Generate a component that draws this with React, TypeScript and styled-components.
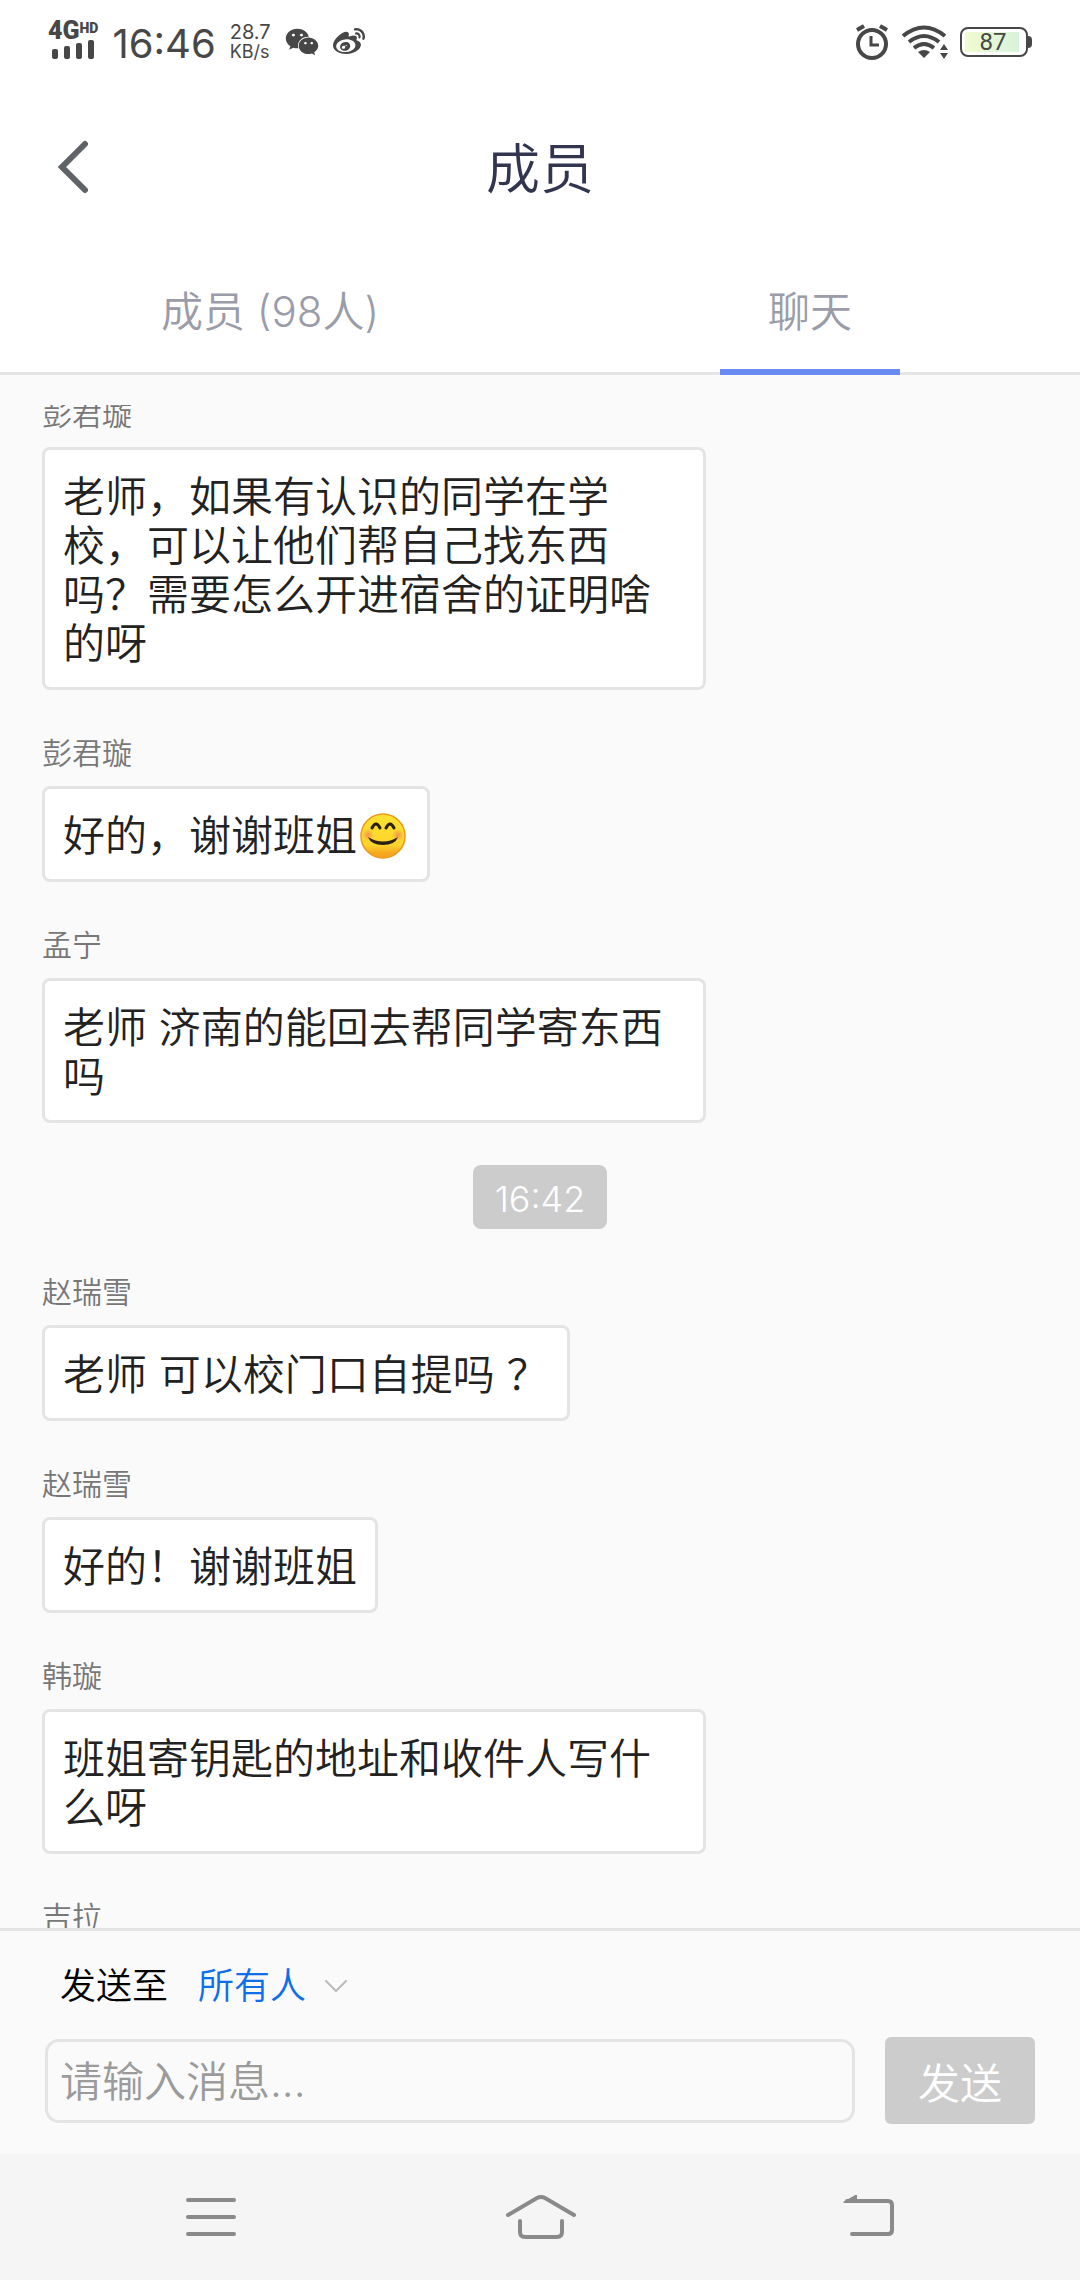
import React, { useLayoutEffect, useRef, useState } from "react";
import styled, { createGlobalStyle } from "styled-components";
import { FaWeibo, FaWeixin } from "react-icons/fa";

const GlobalStyle = createGlobalStyle`
  *, *::before, *::after { box-sizing: border-box; }
  body {
    margin: 0;
    background: #fafafa;
    font-family: Inter, "Noto Sans CJK SC", sans-serif;
    font-weight: 350;
  }
  button, input, select { font-family: inherit; font-weight: inherit; }
`;

const Screen = styled.div`
  display: flex;
  flex-direction: column;
  height: 100vh;
  background: #fafafa;
`;

/* ---------- status bar ---------- */

const StatusBar = styled.div`
  display: flex;
  flex: none;
  align-items: center;
  justify-content: space-between;
  height: 84px;
  padding: 0 48px;
  background: #fff;
  color: #474747;
  font-weight: 400;
`;

const StatusGroup = styled.div<{ $gap: number }>`
  display: flex;
  align-items: center;
  gap: ${(p) => p.$gap}px;
`;

const Signal = styled.div`
  display: flex;
  flex-direction: column;
  padding-bottom: 2px;
`;

const Network = styled.div`
  display: flex;
  align-items: flex-start;
  font-family: Roboto, sans-serif;
  font-size: 25px;
  font-weight: 900;
  line-height: 18px;
`;

const NetworkMark = styled.span`
  font-size: 14px;
  line-height: 12px;
`;

const Clock = styled.span`
  padding-top: 4px;
  font-size: 40px;
  line-height: 48px;
`;

const Speed = styled.span`
  display: flex;
  flex-direction: column;
  font-size: 20px;
  line-height: 19px;
`;

const SpeedUnit = styled.span`
  font-size: 18px;
`;

const Battery = styled.div`
  display: flex;
  align-items: center;
`;

const BatteryCase = styled.div`
  width: 68px;
  height: 30px;
  padding: 3px;
  border: 2px solid #474747;
  border-radius: 8px;
`;

const BatteryLevel = styled.div`
  width: 54px;
  height: 20px;
  padding-left: 2px;
  background: linear-gradient(90deg, #f0fbd0, #d8f3dc);
  font-family: Roboto, sans-serif;
  font-size: 24px;
  line-height: 21px;
  text-align: center;
`;

const BatteryTip = styled.div`
  width: 4px;
  height: 12px;
  border-radius: 0 4px 4px 0;
  background: #474747;
`;

/* ---------- header and tabs ---------- */

const Header = styled.header`
  display: grid;
  flex: none;
  grid-template-columns: 96px 1fr 96px;
  align-items: center;
  height: 168px;
  background: #fff;
`;

const IconButton = styled.button`
  display: flex;
  align-items: center;
  justify-content: center;
  padding: 0;
  border: 0;
  background: none;
  color: ${(p) => p.color};
`;

const BackButton = styled(IconButton)`
  justify-content: flex-end;
  width: 96px;
  height: 96px;
  padding: 0 7px 2px 0;
`;

const Title = styled.h1`
  margin: 0;
  padding-top: 4px;
  color: #32354f;
  font-size: 54px;
  font-weight: 350;
  line-height: 72px;
  text-align: center;
`;

const Tabs = styled.div`
  display: flex;
  flex: none;
  height: 123px;
  border-bottom: 3px solid #e5e5e5;
  background: #fff;
`;

const Tab = styled.button<{ $active: boolean }>`
  position: relative;
  flex: 1;
  padding: 0;
  border: 0;
  background: none;
  color: #9b9ca9;
  font-size: 42px;
  line-height: 60px;

  &::after {
    content: "";
    position: absolute;
    bottom: -3px;
    left: 50%;
    width: 180px;
    height: 6px;
    margin-left: -90px;
    background: ${(p) => (p.$active ? "#678bf0" : "transparent")};
  }
`;

/* ---------- conversation ---------- */

const Conversation = styled.main`
  flex: 1;
  min-height: 0;
  margin-top: 30px;
  padding: 0 42px;
  overflow-y: auto;
  scrollbar-width: none;
`;

const MessageList = styled.ol`
  display: flex;
  flex-direction: column;
  gap: 42px;
  margin: 0;
  padding: 0;
  list-style: none;
`;

const Message = styled.li`
  display: flex;
  flex-direction: column;
  align-items: flex-start;
  gap: 12px;
`;

const Sender = styled.span`
  color: #777;
  font-size: 30px;
  line-height: 42px;
`;

const Bubble = styled.p`
  max-width: calc(100% * 2 / 3);
  margin: 0;
  padding: 22px 18px 19px;
  border: 3px solid #e4e4e4;
  border-radius: 8px;
  background: #fff;
  color: #222;
  font-size: 42px;
  line-height: 49px;
`;

const EmojiSvg = styled.svg`
  display: inline-block;
  width: 46px;
  height: 46px;
  margin: 0 3px;
  vertical-align: -8px;
`;

const TimeMark = styled.li`
  align-self: center;
  padding: 8px 22px 4px;
  border-radius: 8px;
  background: #ccc;
  color: #fff;
  font-size: 36px;
  font-weight: 300;
  line-height: 52px;
`;

/* ---------- composer ---------- */

const Composer = styled.form`
  display: flex;
  flex: none;
  flex-direction: column;
  gap: 27px;
  padding: 31px 45px 30px;
  border-top: 3px solid #e4e4e4;
`;

const Recipient = styled.div`
  display: flex;
  align-items: center;
  gap: 30px;
  padding-left: 15px;
  font-size: 36px;
  line-height: 48px;
`;

const RecipientLabel = styled.label`
  color: #000;
`;

const SelectWrap = styled.div`
  position: relative;
  display: flex;
  align-items: center;
`;

const Select = styled.select`
  height: 48px;
  padding: 0 42px 0 0;
  border: 0;
  appearance: none;
  background: none;
  color: #0f6fe8;
  font-size: 36px;
  line-height: 48px;
`;

const SelectArrow = styled.svg`
  position: absolute;
  right: 1px;
  pointer-events: none;
`;

const Entry = styled.div`
  display: flex;
  align-items: center;
  gap: 30px;
`;

const MessageInput = styled.input`
  flex: 1;
  min-width: 0;
  height: 84px;
  padding: 2px 12px 0;
  border: 3px solid #e4e4e4;
  border-radius: 14px;
  background: none;
  color: #222;
  font-size: 42px;

  &::placeholder {
    color: #9b9b9b;
    opacity: 1;
  }
`;

const SendButton = styled.button`
  width: 150px;
  height: 87px;
  padding: 0;
  border: 0;
  border-radius: 6px;
  background: #ccc;
  color: #fff;
  font-size: 42px;
`;

/* ---------- system navigation ---------- */

const SystemNav = styled.nav`
  display: grid;
  flex: none;
  grid-template-columns: 1fr 1fr 1fr;
  height: 126px;
  padding: 0 45px;
  background: #f5f5f5;
`;

const AlarmIcon = () => (
  <svg width="34" height="36" viewBox="0 0 34 36" fill="none" stroke="currentColor">
    <circle cx="17" cy="20" r="14" strokeWidth="4" />
    <path d="M16 12v9h8" strokeWidth="3" />
    <path d="M2 6l7-4M32 6l-7-4" strokeWidth="4" />
  </svg>
);

const WifiIcon = () => (
  <svg width="47" height="34" viewBox="0 0 47 34" fill="none" stroke="currentColor">
    <path d="M2 11Q23 -6 44 11M8 17Q23 5 38 17M13 23Q23 15 33 23" strokeWidth="4" />
    <path d="M17 27Q23 23 29 27L23 33Z" fill="currentColor" stroke="none" />
    <path d="M39 25l4-6 4 6ZM39 28l4 6 4-6Z" fill="currentColor" stroke="none" />
  </svg>
);

const SignalBars = () => (
  <svg width="50" height="20" viewBox="0 0 50 20" fill="currentColor">
    <rect x="4" y="9" width="6" height="10" rx="2" />
    <rect x="16" y="6" width="6" height="13" rx="2" />
    <rect x="28" y="3" width="6" height="16" rx="2" />
    <rect x="40" y="0" width="6" height="19" rx="2" />
  </svg>
);

const SmileEmoji = () => (
  <EmojiSvg viewBox="0 0 46 46" role="img" aria-label="😊">
    <defs>
      <linearGradient id="face" x1="0" y1="0" x2="0" y2="1">
        <stop offset="0.1" stopColor="#fde030" />
        <stop offset="0.7" stopColor="#fcd52c" />
        <stop offset="0.9" stopColor="#f7a520" />
      </linearGradient>
      <radialGradient id="cheek">
        <stop offset="0" stopColor="#f2835a" stopOpacity="0.8" />
        <stop offset="1" stopColor="#f2835a" stopOpacity="0" />
      </radialGradient>
    </defs>
    <circle cx="23" cy="23" r="22" fill="url(#face)" stroke="#eb9a1c" strokeWidth="1.5" />
    <circle cx="8" cy="22" r="6" fill="url(#cheek)" />
    <circle cx="38" cy="22" r="6" fill="url(#cheek)" />
    <path
      d="M12 15q4 -8 8 0M26 15q4 -8 8 0"
      fill="none"
      stroke="#2b2010"
      strokeWidth="3"
      strokeLinecap="round"
    />
    <path d="M8 24q15 9 30 0q-3 8 -15 8t-15 -8Z" fill="#2b2010" />
  </EmojiSvg>
);

type ChatEntry =
  | { kind: "message"; sender: string; body?: React.ReactNode }
  | { kind: "time"; label: string };

const entries: ChatEntry[] = [
  {
    kind: "message",
    sender: "彭君璇",
    body: "老师，如果有认识的同学在学校，可以让他们帮自己找东西吗？需要怎么开进宿舍的证明啥的呀",
  },
  {
    kind: "message",
    sender: "彭君璇",
    body: (
      <>
        好的，谢谢班姐
        <SmileEmoji />
      </>
    ),
  },
  { kind: "message", sender: "孟宁", body: "老师 济南的能回去帮同学寄东西吗" },
  { kind: "time", label: "16:42" },
  { kind: "message", sender: "赵瑞雪", body: "老师 可以校门口自提吗 ？" },
  { kind: "message", sender: "赵瑞雪", body: "好的！谢谢班姐" },
  { kind: "message", sender: "韩璇", body: "班姐寄钥匙的地址和收件人写什么呀" },
  { kind: "message", sender: "吉拉" },
];

const INITIAL_SCROLL = 12;

export default function App() {
  const [tab, setTab] = useState<"members" | "chat">("chat");
  const [draft, setDraft] = useState("");
  const conversation = useRef<HTMLElement>(null);

  useLayoutEffect(() => {
    if (conversation.current) conversation.current.scrollTop = INITIAL_SCROLL;
  }, []);

  return (
    <Screen>
      <GlobalStyle />
      <StatusBar>
        <StatusGroup $gap={14}>
          <Signal>
            <Network>
              4G<NetworkMark>HD</NetworkMark>
            </Network>
            <SignalBars />
          </Signal>
          <Clock>16:46</Clock>
          <Speed>
            28.7
            <SpeedUnit>KB/s</SpeedUnit>
          </Speed>
          <FaWeixin size={34} />
          <FaWeibo size={32} />
        </StatusGroup>
        <StatusGroup $gap={12}>
          <AlarmIcon />
          <WifiIcon />
          <Battery>
            <BatteryCase>
              <BatteryLevel>87</BatteryLevel>
            </BatteryCase>
            <BatteryTip />
          </Battery>
        </StatusGroup>
      </StatusBar>

      <Header>
        <BackButton type="button" aria-label="返回" color="#5f6368">
          <svg width="32" height="56" viewBox="0 0 32 56" fill="none" stroke="currentColor">
            <path d="M28 5L5 28L28 51" strokeWidth="6" strokeLinecap="round" />
          </svg>
        </BackButton>
        <Title>成员</Title>
      </Header>

      <Tabs role="tablist">
        <Tab
          type="button"
          role="tab"
          aria-selected={tab === "members"}
          $active={tab === "members"}
          onClick={() => setTab("members")}
        >
          成员 (98人)
        </Tab>
        <Tab
          type="button"
          role="tab"
          aria-selected={tab === "chat"}
          $active={tab === "chat"}
          onClick={() => setTab("chat")}
        >
          聊天
        </Tab>
      </Tabs>

      <Conversation ref={conversation}>
        <MessageList>
          {entries.map((entry, i) =>
            entry.kind === "time" ? (
              <TimeMark key={i}>{entry.label}</TimeMark>
            ) : (
              <Message key={i}>
                <Sender>{entry.sender}</Sender>
                {entry.body && <Bubble>{entry.body}</Bubble>}
              </Message>
            )
          )}
        </MessageList>
      </Conversation>

      <Composer onSubmit={(e) => e.preventDefault()}>
        <Recipient>
          <RecipientLabel htmlFor="recipient">发送至</RecipientLabel>
          <SelectWrap>
            <Select id="recipient">
              <option>所有人</option>
            </Select>
            <SelectArrow width="24" height="16" viewBox="0 0 24 16" fill="none" stroke="#bbb">
              <path d="M2 3L12 13L22 3" strokeWidth="2" strokeLinecap="round" />
            </SelectArrow>
          </SelectWrap>
        </Recipient>
        <Entry>
          <MessageInput
            aria-label="消息"
            placeholder="请输入消息..."
            value={draft}
            onChange={(e) => setDraft(e.target.value)}
          />
          <SendButton type="submit">发送</SendButton>
        </Entry>
      </Composer>

      <SystemNav>
        <IconButton type="button" aria-label="最近任务" color="#8a8a8a">
          <svg width="54" height="44" viewBox="0 0 54 44" stroke="currentColor">
            <path d="M5 5H51M5 22H51M5 39H51" strokeWidth="4" strokeLinecap="round" />
          </svg>
        </IconButton>
        <IconButton type="button" aria-label="主屏幕" color="#8a8a8a">
          <svg width="74" height="46" viewBox="0 0 74 46" fill="none" stroke="currentColor">
            <path
              d="M5 21L34 4Q38 2 42 4L71 21M17 27V38Q17 43 22 43H54Q59 43 59 38V27"
              strokeWidth="4"
              strokeLinecap="round"
            />
          </svg>
        </IconButton>
        <IconButton type="button" aria-label="返回上一级" color="#8a8a8a">
          <svg width="54" height="44" viewBox="0 0 54 44" fill="none" stroke="currentColor">
            <path
              d="M4 6H45Q49 6 49 10V35Q49 39 45 39H9"
              strokeWidth="4"
              strokeLinecap="round"
            />
            <path d="M0 7L14 -1V8H1Z" fill="currentColor" stroke="none" />
          </svg>
        </IconButton>
      </SystemNav>
    </Screen>
  );
}
